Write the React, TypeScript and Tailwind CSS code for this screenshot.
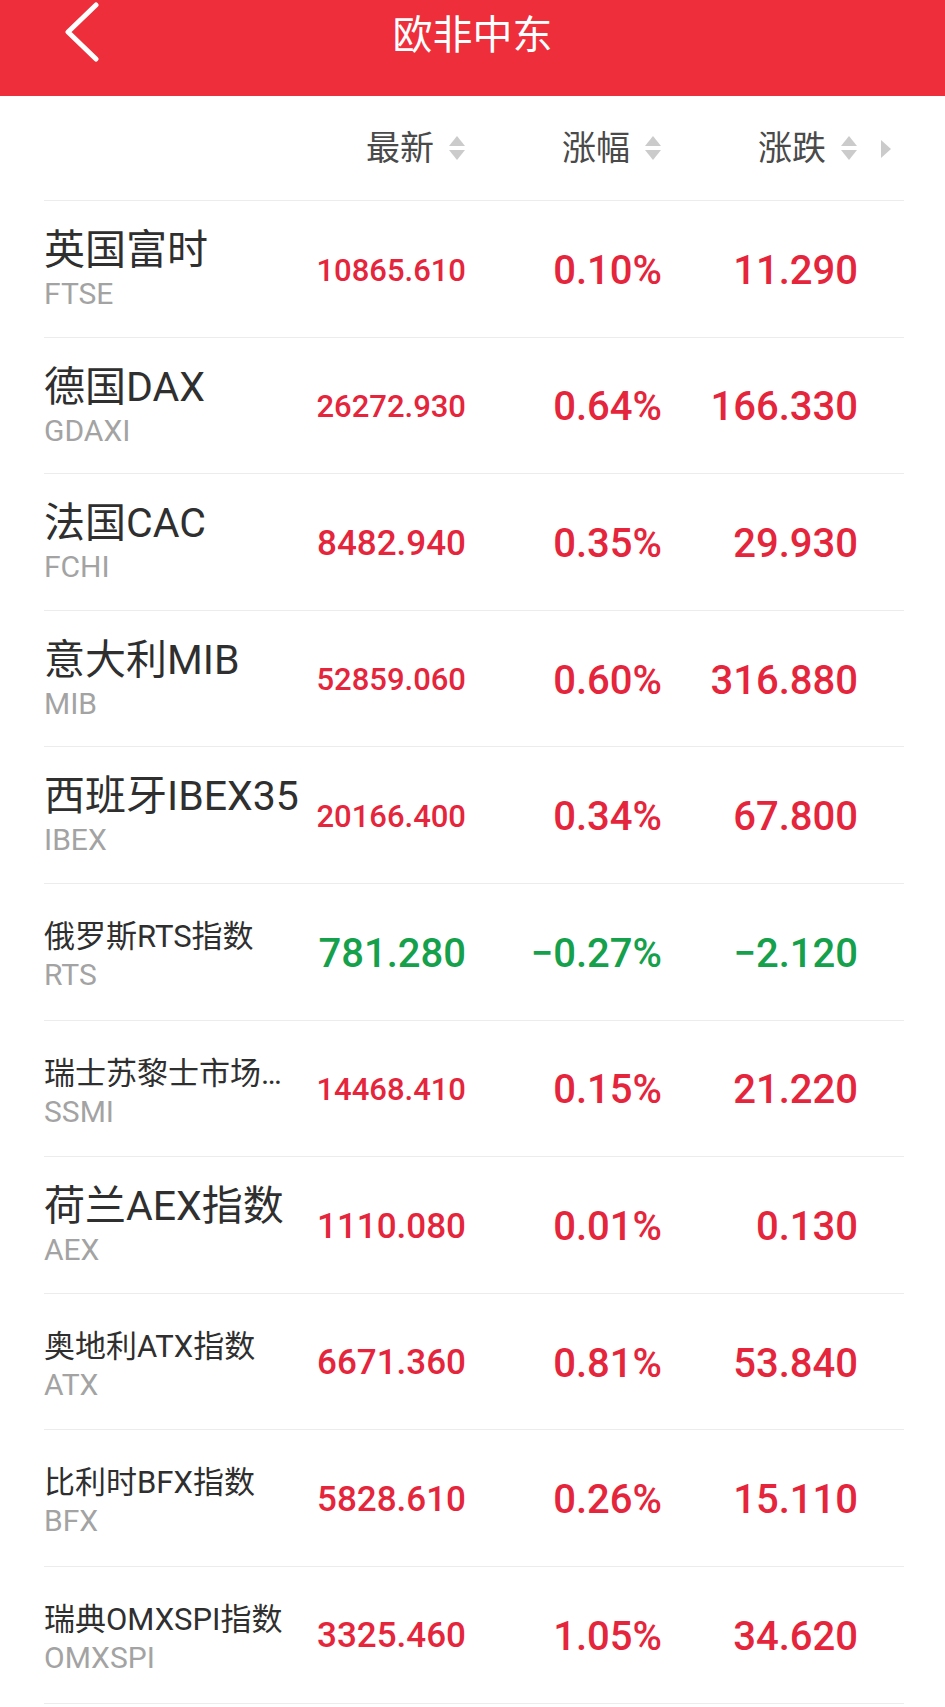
import type { JSX } from 'react';

interface IndexRow {
  name: string;
  code: string;
  last: string;
  pct: string;
  change: string;
  up: boolean;
  small?: boolean;
  lastSize: string;
}

// the "最新" column shrinks its text to fit, like the app does
const ROWS: IndexRow[] = [
  { name: '英国富时', code: 'FTSE', last: '10865.610', pct: '0.10%', change: '11.290', up: true, lastSize: 'text-[31px]' },
  { name: '德国DAX', code: 'GDAXI', last: '26272.930', pct: '0.64%', change: '166.330', up: true, lastSize: 'text-[31px]' },
  { name: '法国CAC', code: 'FCHI', last: '8482.940', pct: '0.35%', change: '29.930', up: true, lastSize: 'text-[35px]' },
  { name: '意大利MIB', code: 'MIB', last: '52859.060', pct: '0.60%', change: '316.880', up: true, lastSize: 'text-[31px]' },
  { name: '西班牙IBEX35', code: 'IBEX', last: '20166.400', pct: '0.34%', change: '67.800', up: true, lastSize: 'text-[31px]' },
  { name: '俄罗斯RTS指数', code: 'RTS', last: '781.280', pct: '−0.27%', change: '−2.120', up: false, small: true, lastSize: 'text-[40px]' },
  { name: '瑞士苏黎士市场指数', code: 'SSMI', last: '14468.410', pct: '0.15%', change: '21.220', up: true, small: true, lastSize: 'text-[31px]' },
  { name: '荷兰AEX指数', code: 'AEX', last: '1110.080', pct: '0.01%', change: '0.130', up: true, lastSize: 'text-[35px]' },
  { name: '奥地利ATX指数', code: 'ATX', last: '6671.360', pct: '0.81%', change: '53.840', up: true, small: true, lastSize: 'text-[35px]' },
  { name: '比利时BFX指数', code: 'BFX', last: '5828.610', pct: '0.26%', change: '15.110', up: true, small: true, lastSize: 'text-[35px]' },
  { name: '瑞典OMXSPI指数', code: 'OMXSPI', last: '3325.460', pct: '1.05%', change: '34.620', up: true, small: true, lastSize: 'text-[35px]' },
];

function SortArrows(): JSX.Element {
  return (
    <svg width="18" height="26" viewBox="0 0 18 26" aria-hidden="true">
      <path d="M9 1 L17 11 L1 11 Z" fill="#cbcbcb" />
      <path d="M1 15 L17 15 L9 25 Z" fill="#cbcbcb" />
    </svg>
  );
}

function HeaderCell({ label }: { label: string }): JSX.Element {
  return (
    <div className="flex items-center justify-end gap-[14px]">
      <span className="text-[34px] leading-[44px] text-[#4a4a4a]">{label}</span>
      <SortArrows />
    </div>
  );
}

export default function App(): JSX.Element {
  return (
    <div className="w-[945px] min-h-screen bg-white font-['Roboto','Noto_Sans_CJK_SC',sans-serif]">
      {/* Nav bar */}
      <div className="h-[96px] bg-[#ee2e3b] grid grid-cols-[1fr_auto_1fr]">
        <div className="pl-[64px] pt-[2px]">
          <svg width="36" height="60" viewBox="0 0 36 60" aria-hidden="true">
            <path d="M32 3 L4 30 L32 57" fill="none" stroke="#ffffff" strokeWidth="5" strokeLinecap="round" strokeLinejoin="round" />
          </svg>
        </div>
        <h1 className="pt-[12px] text-[40px] leading-[48px] text-white">欧非中东</h1>
        <div />
      </div>

      <div className="ml-[44px] mr-[41px]">
        {/* Column headers */}
        <div className="h-[105px] grid grid-cols-[260px_162px_196px_196px_1fr] items-center border-b border-[#ececec]">
          <div />
          <HeaderCell label="最新" />
          <HeaderCell label="涨幅" />
          <HeaderCell label="涨跌" />
          <div className="pl-[22px] pt-[2px]">
            <svg width="12" height="20" viewBox="0 0 12 20" aria-hidden="true">
              <path d="M1 1 L11 10 L1 19 Z" fill="#cbcbcb" />
            </svg>
          </div>
        </div>

        {/* Rows */}
        {ROWS.map((r) => {
          const color = r.up ? 'text-[#e5253b]' : 'text-[#15a04c]';
          return (
            <div
              key={r.code}
              className="h-[136.6px] grid grid-cols-[260px_162px_196px_196px_1fr] border-b border-[#ececec]"
            >
              <div className={r.small ? 'flex flex-col pt-[34px] min-w-0' : 'flex flex-col pt-[27px] min-w-0'}>
                <span
                  className={
                    r.small
                      ? 'text-[31px] leading-[38px] text-[#2f2f2f] whitespace-nowrap overflow-hidden text-ellipsis'
                      : 'text-[41px] leading-[44px] text-[#2f2f2f] whitespace-nowrap'
                  }
                >
                  {r.name}
                </span>
                <span className={r.small ? 'text-[30px] leading-[38px] text-[#a3a3a3]' : 'text-[30px] leading-[44px] text-[#a3a3a3]'}>
                  {r.code}
                </span>
              </div>
              <div className={`flex items-center justify-end pt-[4px] font-medium ${r.lastSize} ${color}`}>{r.last}</div>
              <div className={`flex items-center justify-end pt-[4px] font-medium text-[40px] ${color}`}>{r.pct}</div>
              <div className={`flex items-center justify-end pt-[4px] font-medium text-[40px] ${color}`}>{r.change}</div>
              <div />
            </div>
          );
        })}
      </div>
    </div>
  );
}
